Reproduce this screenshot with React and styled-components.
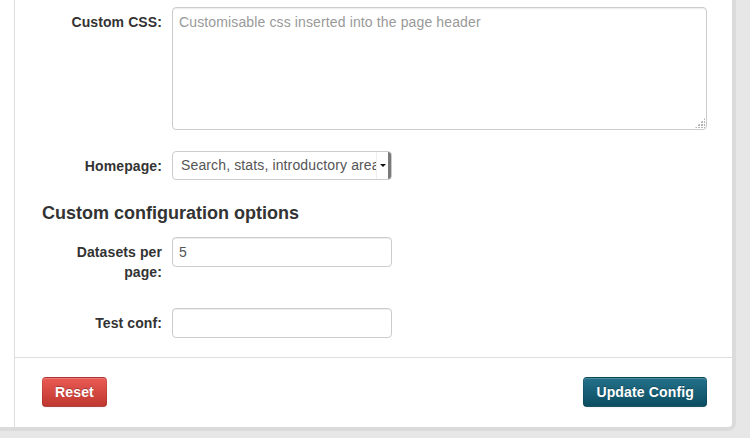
import React from "react";
import styled, { createGlobalStyle } from "styled-components";

const Global = createGlobalStyle`
  html, body { margin: 0; padding: 0; }
  body {
    background: #e7e7e7;
    font-family: "Liberation Sans", Arial, sans-serif;
    font-size: 14px;
    line-height: 20px;
    color: #333;
    height: 438px;
    overflow: hidden;
  }
`;

const Wrapper = styled.div`
  width: 732px;
  display: flex;
  background: #fff;
  border-radius: 0 0 4px 0;
  box-shadow: 0 0 0 4px rgba(0, 0, 0, 0.05);
`;

const Secondary = styled.aside`
  width: 14px;
  flex: none;
  border-right: 1px solid #ddd;
`;

const Main = styled.main`
  flex: 1;
  min-width: 0;
  display: flex;
  flex-direction: column;
`;

const Content = styled.div`
  padding: 7px 25px 19px 27px;
`;

const Row = styled.div`
  display: grid;
  grid-template-columns: 120px 1fr;
  column-gap: 10px;
  margin-bottom: ${(p) => p.$gap ?? 20}px;
`;

const Label = styled.label`
  padding-top: 5px;
  text-align: right;
  font-weight: bold;
  font-size: 14px;
  line-height: 20px;
  letter-spacing: 0.1px;
  color: #333;
`;

const fieldBase = `
  box-sizing: border-box;
  border: 1px solid #ccc;
  border-radius: 4px;
  background: #fff;
  font-family: "Liberation Sans", Arial, sans-serif;
  font-size: 14px;
  line-height: 20px;
  letter-spacing: 0.13px;
  color: #555;
  box-shadow: inset 0 1px 1px rgba(0, 0, 0, 0.075);
`;

const TextAreaWrap = styled.div`
  position: relative;
  width: 535px;
  &::after {
    content: "";
    position: absolute;
    right: 2px;
    bottom: 2px;
    width: 10px;
    height: 10px;
    background: radial-gradient(circle at 1px 1px, #b5b5b5 1px, transparent 1.2px) 0 0 / 3px 3px;
    clip-path: polygon(100% 0, 100% 100%, 0 100%);
    pointer-events: none;
  }
`;

const TextArea = styled.textarea`
  ${fieldBase}
  display: block;
  width: 535px;
  height: 123px;
  padding: 4px 6px;
  margin: 0;
  resize: none;
  &::placeholder { color: #999; opacity: 1; }
`;

const Input = styled.input`
  ${fieldBase}
  display: block;
  width: 220px;
  height: 30px;
  padding: 4px 6px;
  margin: 0;
`;

const Select = styled.div`
  ${fieldBase}
  box-shadow: none;
  width: 220px;
  height: 29px;
  display: flex;
  align-items: stretch;
  overflow: hidden;
`;

const SelectValue = styled.span`
  flex: 1;
  min-width: 0;
  padding: 0 0 0 8px;
  line-height: 27px;
  white-space: nowrap;
  overflow: hidden;
  text-overflow: clip;
`;

const SelectArrow = styled.span`
  flex: none;
  width: 11px;
  display: flex;
  align-items: center;
  justify-content: center;
  background: #fff;
  border-left: 1px solid #eee;
  border-right: 3px solid #7a7a7a;
  box-shadow: 1px 1px 0 #aaa;
  &::after {
    content: "";
    border-left: 3px solid transparent;
    border-right: 3px solid transparent;
    border-top: 3px solid #111;
  }
`;

const Heading = styled.h3`
  margin: 23px 0 14px;
  font-size: 18px;
  line-height: 20px;
  font-weight: bold;
  color: #333;
`;

const Footer = styled.div`
  border-top: 1px solid #ddd;
  padding: 19px 25px 20px 27px;
  display: flex;
  justify-content: space-between;
`;

const Button = styled.button`
  box-sizing: border-box;
  height: 30px;
  padding: 4px 12px;
  font-family: "Liberation Sans", Arial, sans-serif;
  font-size: 14px;
  line-height: 20px;
  font-weight: bold;
  letter-spacing: 0.15px;
  color: #fff;
  text-shadow: 0 -1px 0 rgba(0, 0, 0, 0.25);
  border: 1px solid;
  border-color: rgba(0, 0, 0, 0.1) rgba(0, 0, 0, 0.1) rgba(0, 0, 0, 0.25);
  border-radius: 4px;
  box-shadow: inset 0 1px 0 rgba(255, 255, 255, 0.2), 0 1px 2px rgba(0, 0, 0, 0.05);
  background-image: ${(p) =>
    p.$variant === "danger"
      ? "linear-gradient(to bottom, #ea5a55, #bf382f)"
      : "linear-gradient(to bottom, #24718a, #0b4d61)"};
  cursor: pointer;
`;

export default function App() {
  return (
    <>
      <Global />
      <Wrapper>
        <Secondary />
        <Main>
          <Content>
            <Row $gap={21}>
              <Label>Custom CSS:</Label>
              <TextAreaWrap>
                <TextArea placeholder="Customisable css inserted into the page header" />
              </TextAreaWrap>
            </Row>
            <Row $gap={0}>
              <Label>Homepage:</Label>
              <Select>
                <SelectValue>Search, stats, introductory area and stats</SelectValue>
                <SelectArrow />
              </Select>
            </Row>
            <Heading>Custom configuration options</Heading>
            <Row $gap={26}>
              <Label>Datasets per page:</Label>
              <div>
                <Input defaultValue="5" />
              </div>
            </Row>
            <Row $gap={0}>
              <Label>Test conf:</Label>
              <div>
                <Input defaultValue="" />
              </div>
            </Row>
          </Content>
          <Footer>
            <Button $variant="danger">Reset</Button>
            <Button $variant="primary">Update Config</Button>
          </Footer>
        </Main>
      </Wrapper>
    </>
  );
}
